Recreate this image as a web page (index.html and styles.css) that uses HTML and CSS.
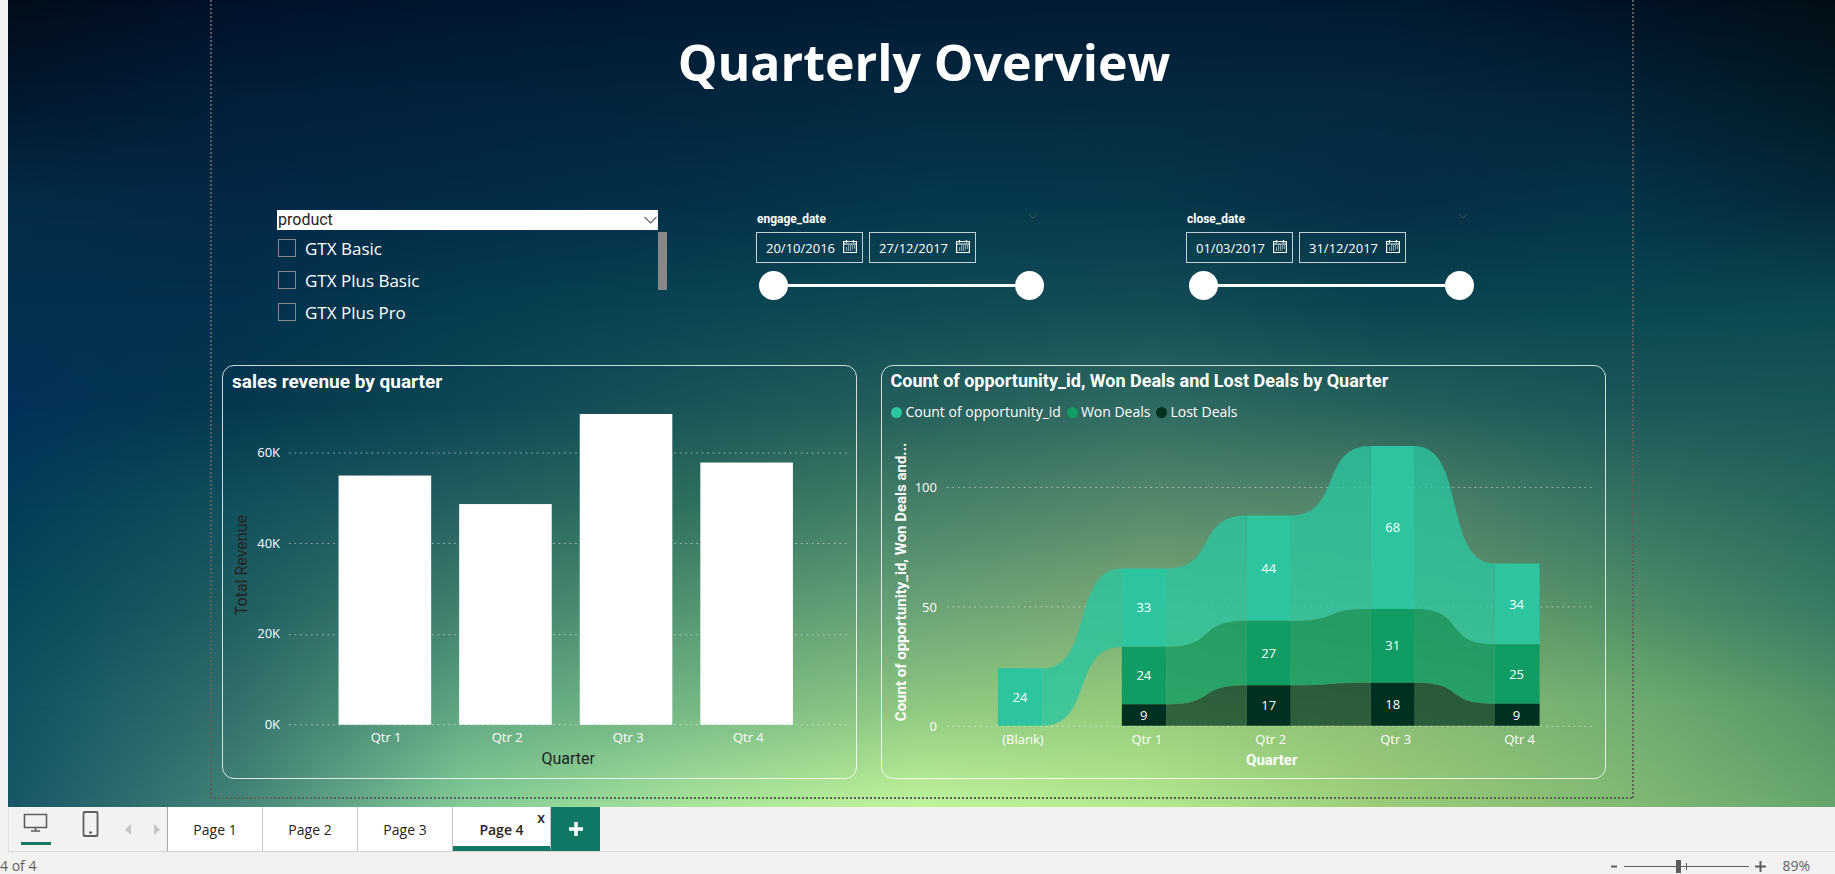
FILE: index.html
```html
<!DOCTYPE html>
<html lang="en">
<head>
<meta charset="utf-8">
<title>Quarterly Overview</title>
<link rel="stylesheet" href="styles.css">
</head>
<body>
<svg class="defs" aria-hidden="true">
  <symbol id="calendar" viewBox="0 0 14 13">
    <path d="M.6 1.5h12.800v11H.6z" fill="none" stroke="currentColor" stroke-width="1.2"/>
    <path d="M.6 4h12.800" stroke="currentColor" stroke-width="1"/>
    <path d="M3.500 0v2.800M10.500 0v2.800" stroke="currentColor" stroke-width="1.2"/>
    <path d="M5 6h7M3 8h9M3 10h6.500" stroke="currentColor" stroke-width="1.2" stroke-dasharray="1.2 .8"/>
  </symbol>
  <symbol id="chevron" viewBox="0 0 13 8">
    <path d="M.5 1l6 6 6-6" fill="none" stroke="currentColor" stroke-width="1.1"/>
  </symbol>
</svg>

<main class="canvas">
  <div class="backdrop" aria-hidden="true">
    <i></i><i></i><i></i><i></i><i></i><i></i><i></i><i></i><i></i>
  </div>
  <div class="report">
    <h1 class="report-title">Quarterly Overview</h1>

    <section class="slicers">
      <div class="product">
        <button class="product-head" type="button">product<svg class="chevron"><use href="#chevron"/></svg></button>
        <div class="product-body">
          <div class="product-list">
            <label><input type="checkbox">GTX Basic</label>
            <label><input type="checkbox">GTX Plus Basic</label>
            <label><input type="checkbox">GTX Plus Pro</label>
          </div>
          <div class="scroll-thumb"></div>
        </div>
      </div>
      <div class="date-slicer">
        <div class="date-head"><h2>engage_date</h2><svg class="chevron small"><use href="#chevron"/></svg></div>
        <div class="date-row">
          <label class="date-box"><input type="text" value="20/10/2016" aria-label="Engage date from"><svg><use href="#calendar"/></svg></label>
          <label class="date-box"><input type="text" value="27/12/2017" aria-label="Engage date to"><svg><use href="#calendar"/></svg></label>
        </div>
        <div class="range"><input type="range" value="0" aria-label="Engage date start"><input type="range" value="100" aria-label="Engage date end"></div>
      </div>
      <div class="date-slicer">
        <div class="date-head"><h2>close_date</h2><svg class="chevron small"><use href="#chevron"/></svg></div>
        <div class="date-row">
          <label class="date-box"><input type="text" value="01/03/2017" aria-label="Close date from"><svg><use href="#calendar"/></svg></label>
          <label class="date-box"><input type="text" value="31/12/2017" aria-label="Close date to"><svg><use href="#calendar"/></svg></label>
        </div>
        <div class="range"><input type="range" value="0" aria-label="Close date start"><input type="range" value="100" aria-label="Close date end"></div>
      </div>
    </section>

    <section class="cards">
      <article class="card">
        <h2 class="card-title large">sales revenue by quarter</h2>
        <svg class="chart" viewBox="224 398 633 380" role="img" aria-label="Sales revenue by quarter">
          <g class="grid"><path d="M290 453H847M290 543.5H847M290 634.5H847M290 724.5H847"/></g>
          <g class="tick end">
            <text x="281" y="457">60K</text><text x="281" y="548">40K</text><text x="281" y="638">20K</text><text x="281" y="729">0K</text>
          </g>
          <g fill="#fff">
            <rect x="339.5" y="475.5" width="92.5" height="249"/>
            <rect x="460" y="504" width="92.5" height="220.5"/>
            <rect x="580.5" y="414" width="92.5" height="310.5"/>
            <rect x="701" y="462.5" width="92.5" height="262"/>
          </g>
          <g class="tick mid">
            <text x="387" y="742">Qtr 1</text><text x="508" y="742">Qtr 2</text><text x="629" y="742">Qtr 3</text><text x="749" y="742">Qtr 4</text>
          </g>
          <text class="axis dark" x="569" y="764">Quarter</text>
          <text class="axis dark" transform="translate(248 565) rotate(-90)">Total Revenue</text>
        </svg>
      </article>

      <article class="card">
        <h2 class="card-title">Count of opportunity_id, Won Deals and Lost Deals by Quarter</h2>
        <ul class="legend">
          <li class="count">Count of opportunity_id</li><li class="won">Won Deals</li><li class="lost">Lost Deals</li>
        </ul>
        <svg class="chart" viewBox="883 426 723 352" role="img" aria-label="Opportunities, won and lost deals by quarter">
          <g class="grid"><path d="M948 487.5H1595M948 607H1595M948 726.5H1595"/></g>
          <g class="tick end">
            <text x="938" y="492">100</text><text x="938" y="612">50</text><text x="938" y="731">0</text>
          </g>
          <g class="ribbon">
            <g fill="#2cc5a0">
              <path d="M1043.5 668.5C1095 668.5 1072 568.5 1123 568.5V647C1072 647 1095 726 1043.5 726z"/>
              <path d="M1167.500 568.5C1219 568.5 1196 515.500 1248 515.500V621C1196 621 1219 647 1167.500 647z"/>
              <path d="M1292 515.500C1344 515.500 1320 446 1372 446V609C1320 609 1344 621 1292 621z"/>
              <path d="M1416 446C1468 446 1444 563.500 1496 563.500V644.500C1444 644.500 1468 609 1416 609z"/>
            </g>
            <g fill="#119c63">
              <path d="M1167.500 647C1219 647 1196 621 1248 621V685.500C1196 685.500 1219 704.500 1167.500 704.500z"/>
              <path d="M1292 621C1344 621 1320 609 1372 609V683C1320 683 1344 685.500 1292 685.500z"/>
              <path d="M1416 609C1468 609 1444 644.500 1496 644.500V704C1444 704 1468 683 1416 683z"/>
            </g>
            <g class="deep" fill="#003020">
              <path d="M1167.500 704.500C1219 704.500 1196 685.500 1248 685.500V726H1167.500z"/>
              <path d="M1292 685.500C1344 685.500 1320 683 1372 683V726H1292z"/>
              <path d="M1416 683C1468 683 1444 704 1496 704V726H1416z"/>
            </g>
          </g>
          <path fill="#2cc5a0" d="M999 668.500h44.500V726H999zM1123 568.500h44.500V647H1123zM1248 515.500h44V621h-44zM1372 446h44v163h-44zM1496 563.500h45v81h-45z"/>
          <path fill="#119c63" d="M1123 647h44.500v57.500H1123zM1248 621h44v64.500h-44zM1372 609h44v74h-44zM1496 644.500h45V704h-45z"/>
          <path fill="#003020" d="M1123 704.500h44.500V726H1123zM1248 685.500h44V726h-44zM1372 683h44v43h-44zM1496 704h45v22h-45z"/>
          <g class="tick mid">
            <text x="1021" y="702">24</text>
            <text x="1145" y="612">33</text><text x="1145" y="680">24</text><text x="1145" y="720">9</text>
            <text x="1270" y="573">44</text><text x="1270" y="658">27</text><text x="1270" y="710">17</text>
            <text x="1394" y="532">68</text><text x="1394" y="650">31</text><text x="1394" y="709">18</text>
            <text x="1518" y="609">34</text><text x="1518" y="679">25</text><text x="1518" y="720">9</text>
            <text x="1024" y="744">(Blank)</text><text x="1148" y="744">Qtr 1</text><text x="1272" y="744">Qtr 2</text><text x="1397" y="744">Qtr 3</text><text x="1521" y="744">Qtr 4</text>
          </g>
          <text class="axis strong" x="1273" y="765">Quarter</text>
          <text class="axis strong" transform="translate(907 582) rotate(-90)">Count of opportunity_id, Won Deals and...</text>
        </svg>
      </article>
    </section>
  </div>
</main>

<nav class="tabs">
  <div class="views">
    <button class="view on" type="button" aria-label="Desktop layout"><svg width="26" height="20" viewBox="0 0 26 20"><path d="M1.500 1.500h22v13h-22zM12.500 14.500v3M8 18h9" fill="none" stroke="#605e5c" stroke-width="1.600"/></svg></button>
    <button class="view" type="button" aria-label="Mobile layout"><svg width="17" height="26" viewBox="0 0 17 26"><rect x="1.500" y="1" width="14" height="24" rx="1" fill="none" stroke="#605e5c" stroke-width="1.800"/><path d="M7 21.500h3" stroke="#605e5c" stroke-width="2"/></svg></button>
    <button class="arrow" type="button" aria-label="Previous page"><svg width="7" height="11" viewBox="0 0 7 11"><path d="M6 0v11L0 5.500z" fill="#c8c6c4"/></svg></button>
    <button class="arrow" type="button" aria-label="Next page"><svg width="7" height="11" viewBox="0 0 7 11"><path d="M1 0v11l6-5.500z" fill="#c8c6c4"/></svg></button>
  </div>
  <a class="tab" href="#p1">Page 1</a>
  <a class="tab" href="#p2">Page 2</a>
  <a class="tab" href="#p3">Page 3</a>
  <div class="tab current"><a href="#p4">Page 4</a><button class="close" type="button" aria-label="Close Page 4">x</button></div>
  <button class="add" type="button" aria-label="New page"><svg width="14" height="14" viewBox="0 0 14 14"><path d="M7 0v14M0 7h14" stroke="#fff" stroke-width="3.500"/></svg></button>
</nav>

<footer class="status">
  <span>4 of 4</span>
  <div class="zoom">
    <button type="button" aria-label="Zoom out"><svg width="7" height="11" viewBox="0 0 7 11"><path d="M0 5.500h6" stroke="#605e5c" stroke-width="2"/></svg></button>
    <input type="range" min="0" max="100" value="43" aria-label="Zoom">
    <button type="button" aria-label="Zoom in"><svg width="11" height="11" viewBox="0 0 11 11"><path d="M5.500 0v11M0 5.500h11" stroke="#605e5c" stroke-width="2"/></svg></button>
    <span class="percent">89%</span>
  </div>
</footer>
</body>
</html>
```

FILE: styles.css
```css
* { box-sizing: border-box; }

body {
  margin: 0;
  height: 100vh;
  display: flex;
  flex-direction: column;
  overflow: hidden;
  background: #f3f2f1;
  color: #fff;
  font-family: "Open Sans", "Noto Sans", sans-serif;
  font-size: 14px;
}

button, input { font: inherit; color: inherit; margin: 0; }
button { border: 0; padding: 0; background: none; }
h1, h2, ul { margin: 0; padding: 0; }
.defs { position: absolute; width: 0; height: 0; }

/* Report canvas */
.canvas {
  position: relative;
  flex: 1;
  min-height: 0;
  margin-left: 8px;
  display: flex;
  padding: 0 201px 8px 202px;
}

.backdrop {
  position: absolute;
  inset: 0;
  display: grid;
  grid-template-rows: repeat(8, 1fr);
  background: #02142c;
}
.backdrop i {
  grid-column: 1;
  -webkit-mask-image: linear-gradient(transparent, #000 50%);
  mask-image: linear-gradient(transparent, #000 50%);
}
.backdrop i:nth-child(1) { grid-row: 1 / span 1; -webkit-mask-image: none; mask-image: none; background: linear-gradient(90deg, #020d19, #02112a, #02162e, #021832, #031a35, #031b34, #021a30, #021226, #020e16); }
.backdrop i:nth-child(2) { grid-row: 1 / span 2; background: linear-gradient(90deg, #03182e, #031f3b, #03223e, #03263e, #032a41, #042a3f, #052941, #042438, #031b26); }
.backdrop i:nth-child(3) { grid-row: 2 / span 2; background: linear-gradient(90deg, #042c48, #032846, #032c46, #04304a, #05384e, #06384c, #052e48, #04344a, #042a3a); }
.backdrop i:nth-child(4) { grid-row: 3 / span 2; background: linear-gradient(90deg, #03304f, #03304e, #053c50, #0a4452, #0f4a54, #144c54, #0a4450, #0a4650, #0c4850); }
.backdrop i:nth-child(5) { grid-row: 4 / span 2; background: linear-gradient(90deg, #033158, #05384f, #0d4654, #1a5458, #255f5c, #2f6a62, #25605c, #1c5859, #1a5657); }
.backdrop i:nth-child(6) { grid-row: 5 / span 2; background: linear-gradient(90deg, #043c5a, #12505c, #265f60, #30705f, #468168, #568a6c, #52866a, #387464, #28675e); }
.backdrop i:nth-child(7) { grid-row: 6 / span 2; background: linear-gradient(90deg, #08485c, #205e60, #42806e, #529470, #69a278, #78a874, #6c9c6e, #529068, #387a64); }
.backdrop i:nth-child(8) { grid-row: 7 / span 2; background: linear-gradient(90deg, #105262, #34706c, #5fa580, #76b785, #8ec880, #94cc7c, #8cbe76, #72b070, #559468); }
.backdrop i:nth-child(9) { grid-row: 8 / span 1; -webkit-mask-image: linear-gradient(transparent, #000); mask-image: linear-gradient(transparent, #000); background: linear-gradient(90deg, #185666, #448478, #84cc98, #a8e49a, #c0f49c, #b4e88e, #9ccc7a, #84bc74, #64a46c); }

.report {
  position: relative;
  flex: 1;
  min-width: 0;
  padding: 0 28px 18px 12px;
  background:
    repeating-linear-gradient(#605e5c 0 2px, transparent 2px 4px) left / 2px 100% no-repeat,
    repeating-linear-gradient(#605e5c 0 2px, transparent 2px 4px) right / 2px 100% no-repeat,
    repeating-linear-gradient(90deg, #605e5c 0 2px, transparent 2px 4px) bottom / 100% 2px no-repeat;
}

.report-title {
  height: 210px;
  padding: 24px 0 0 20px;
  text-align: center;
  font-size: 50px;
  line-height: 76px;
  font-weight: 700;
}

/* Slicers */
.slicers {
  display: grid;
  grid-template-columns: 479fr 430fr 420fr;
  height: 155px;
  padding-left: 55px;
}

.product { padding-right: 89px; }
.product-head {
  display: flex;
  justify-content: space-between;
  align-items: center;
  width: calc(100% - 9px);
  height: 20px;
  padding: 0 1px;
  background: #fff;
  color: #252423;
  font: 16px/20px Roboto, sans-serif;
}
.product-head .chevron { width: 13px; height: 8px; color: #605e5c; }
.product-body { display: flex; justify-content: space-between; padding-top: 2px; }
.product-list { display: flex; flex-direction: column; }
.product-list label {
  display: flex;
  align-items: center;
  gap: 9px;
  height: 32px;
  padding-left: 1px;
  font-size: 17px;
}
.product-list input {
  appearance: none;
  width: 18px;
  height: 18px;
  border: 1px solid #8a8886;
}
.scroll-thumb { width: 9px; height: 58px; background: #8a8886; }

.date-slicer { width: 289px; }
.date-head { display: flex; justify-content: space-between; height: 22px; padding: 1px 7px 0 1px; }
.date-head h2 { font: 700 12px/16px Roboto, sans-serif; }
.chevron.small { width: 10px; height: 6px; margin-top: 2px; color: #605e5c; }
.date-row { display: flex; gap: 6px; }
.date-box {
  display: flex;
  align-items: center;
  width: 107px;
  height: 31px;
  padding: 0 5px 0 9px;
  border: 1px solid #c5d0d4;
  font-size: 13px;
}
.date-box input { flex: 1; min-width: 0; padding: 0; border: 0; background: none; outline: 0; }
.date-box svg { width: 14px; height: 13px; margin-bottom: 3px; }

.range { display: flex; padding: 7px 1px 0 3px; }
.range input { appearance: none; flex: 1; min-width: 0; height: 30px; background: linear-gradient(#fff, #fff) center / calc(100% - 20px) 3px no-repeat; }
.range input:first-child { background-position: right; }
.range input:last-child { background-position: left; }
.range input::-webkit-slider-thumb { appearance: none; width: 29px; height: 29px; border-radius: 50%; background: #fff; }

/* Chart cards */
.cards { display: grid; grid-template-columns: 635fr 724fr; column-gap: 24px; }
.card {
  display: flex;
  flex-direction: column;
  min-width: 0;
  height: 414px;
  border: 1px solid rgba(255, 255, 255, .8);
  border-radius: 12px;
}
.card-title {
  padding: 4px 8px 0;
  font: 700 18px/22px Roboto, sans-serif;
  white-space: nowrap;
}
.card-title.large { padding-left: 9px; padding-top: 5px; font-size: 19px; }
.legend { display: flex; gap: 6px; padding: 10px 9px 0; list-style: none; }
.legend li { display: flex; align-items: center; gap: 3px; font-size: 14px; line-height: 20px; }
.legend li::before { content: ""; width: 11px; height: 11px; border-radius: 50%; background: #2cc5a0; }
.legend .won::before { background: #119c63; }
.legend .lost::before { background: #003020; }

.chart { display: block; width: 100%; height: auto; margin-top: auto; }
.grid path { stroke: #fff; stroke-opacity: .55; stroke-width: 1; stroke-dasharray: 1.5 4; }
.tick text { fill: #fff; font-size: 13px; font-weight: 500; }
.end text { text-anchor: end; }
.mid text { text-anchor: middle; }
.axis { font: 16px Roboto, sans-serif; text-anchor: middle; }
.dark { fill: #252423; }
.strong { fill: #fff; font-size: 15px; font-weight: 700; }
.ribbon { opacity: .8; }
.ribbon .deep { opacity: .85; }

/* Page tabs */
.tabs {
  display: flex;
  height: 45px;
  margin-left: 8px;
  border-bottom: 1px solid #d8d6d4;
  border-left: 1px solid #e1dfdd;
  color: #252423;
}
.views { display: flex; width: 159px; border-right: 1px solid #a8a6a4; }
.view { width: 30px; height: 38px; margin: 0 13px 0 12px; padding-top: 0; }
.view + .view { margin: 0 20px 0 12px; }
.view.on { border-bottom: 3px solid #117865; }
.arrow { width: 14px; height: 44px; margin-right: 14px; }
.arrow:last-child { margin-right: 0; }
.arrow svg { display: block; }
.tab {
  position: relative;
  display: flex;
  align-items: center;
  justify-content: center;
  width: 95px;
  height: 44px;
  border-right: 1px solid #c8c6c4;
  background: #fff;
  color: #252423;
  text-decoration: none;
}
.tab a { color: inherit; text-decoration: none; }
.tab.current { width: 98px; font-weight: 600; border-bottom: 5px solid #117865; padding-top: 5px; }
.close { position: absolute; top: 1px; right: 5px; font-size: 14px; line-height: 20px; }
.add { display: flex; align-items: center; justify-content: center; width: 49px; height: 44px; background: #117865; }

/* Status bar */
.status {
  display: flex;
  justify-content: space-between;
  height: 22px;
  padding-right: 25px;
  color: #605e5c;
  font-size: 14px;
  line-height: 28px;
}
.zoom { display: flex; height: 28px; align-items: center; gap: 6px; }
.zoom button { display: flex; }
.zoom input {
  appearance: none;
  width: 125px;
  height: 13px;
  background:
    linear-gradient(#605e5c, #605e5c) 50% 50% / 1px 7px no-repeat,
    linear-gradient(#605e5c, #605e5c) center / 100% 1px no-repeat;
}
.zoom input::-webkit-slider-thumb { appearance: none; width: 5px; height: 13px; background: #605e5c; }
.percent { margin-left: 10px; }
```
